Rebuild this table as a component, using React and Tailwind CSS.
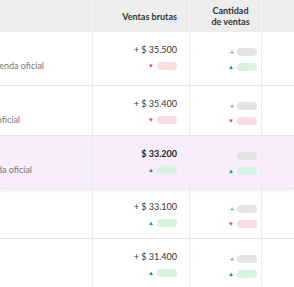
import React from 'react';

const ROWS = [
  { h: 'h-[54px]', sub: 'w-[44px]', value: '+ $ 35.500', main: 'down', qtyTop: true, qty: 'up' },
  { h: 'h-[50px]', sub: 'w-[20px]', value: '+ $ 35.400', main: 'down', qtyTop: true, qty: 'down' },
  { h: 'h-[53px]', sub: 'w-[32px]', value: '$ 33.200', main: 'up', qtyTop: false, qty: 'up', active: true },
  { h: 'h-[50px]', sub: null, value: '+ $ 33.100', main: 'up', qtyTop: true, qty: 'down' },
  { h: 'h-[50px]', sub: null, value: '+ $ 31.400', main: 'up', qtyTop: true, qty: 'up' },
];

function Trend({ dir }) {
  const up = dir === 'up';
  return (
    <div className="flex items-center gap-[3px]">
      <span className={up ? 'text-[6px] leading-none text-[#00a650]' : 'text-[6px] leading-none text-[#e3475f]'}>
        {up ? '▲' : '▼'}
      </span>
      <span className={up ? 'h-[8px] w-[20px] rounded-full bg-[#d7f3e2]' : 'h-[8px] w-[20px] rounded-full bg-[#fcdce3]'} />
    </div>
  );
}

export default function App() {
  return (
    <div className="h-[287px] w-[294px] overflow-hidden bg-white text-[#333]" style={{ fontFamily: 'Lato, "Open Sans", sans-serif' }}>
      {/* Header */}
      <div className="grid h-[32px] grid-cols-[93px_97px_72px_1fr] bg-[#ededed] text-[9px] font-bold leading-[11px] text-[#333]">
        <div className="border-r border-[#f4f4f4]" />
        <div className="flex items-center justify-end border-r border-[#f4f4f4] pr-[12px]">Ventas brutas</div>
        <div className="flex items-center justify-center border-r border-[#f4f4f4] pl-[10px] text-center">
          Cantidad<br />de ventas
        </div>
        <div />
      </div>

      {ROWS.map((r, i) => (
        <div
          key={i}
          className={
            'grid grid-cols-[93px_97px_72px_1fr] border-b border-[#e8e8e8] ' +
            r.h +
            (r.active ? ' relative bg-[#f8edfc] shadow-[0_2px_4px_rgba(0,0,0,0.06)]' : '')
          }
        >
          {/* scrolled-off product column */}
          <div className="overflow-hidden border-r border-[#ececec] pt-[29px]">
            {r.sub && (
              <div className={'flex justify-end ' + r.sub}>
                <span className="whitespace-nowrap text-[9px] leading-[10px] text-[#777]">Tienda oficial</span>
              </div>
            )}
          </div>

          <div className="flex flex-col items-end border-r border-[#ececec] pr-[12px] pt-[12px]">
            <span className={r.active ? 'text-[9px] font-bold leading-[12px] text-[#222]' : 'text-[9px] leading-[12px] text-[#333]'}>
              {r.value}
            </span>
            <div className="mt-[6px]">
              <Trend dir={r.main} />
            </div>
          </div>

          <div className="flex flex-col items-end border-r border-[#ececec] pr-[4px] pt-[16px]">
            <div className="flex items-center gap-[3px]">
              {r.qtyTop && <span className="text-[7px] leading-none text-[#666]">+</span>}
              <span className="h-[8px] w-[20px] rounded-full bg-[#e4e4e4]" />
            </div>
            <div className="mt-[7px]">
              <Trend dir={r.qty} />
            </div>
          </div>

          <div />
        </div>
      ))}
    </div>
  );
}
